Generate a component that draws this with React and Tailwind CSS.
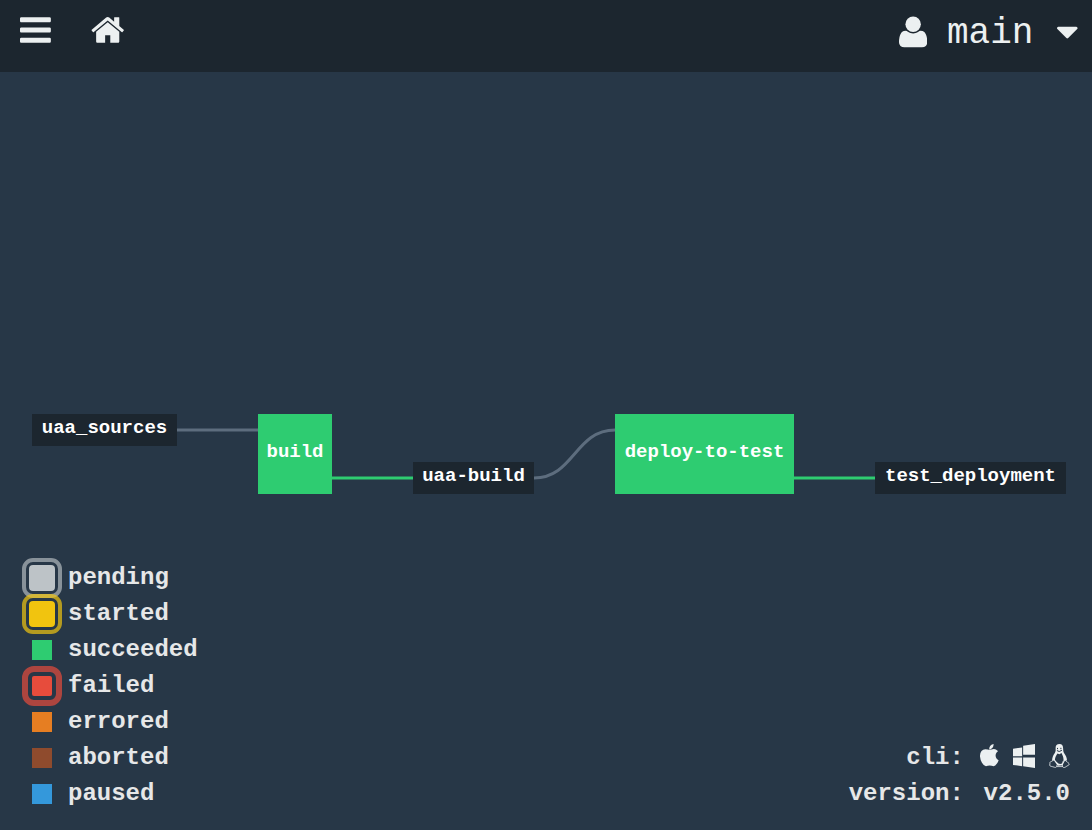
const statuses = [
	{ name: 'pending', swatch: 'size-[26px] rounded bg-[#bdc3c7] outline-4 outline-offset-3 outline-[#bdc3c7]/65' },
	{ name: 'started', swatch: 'size-[26px] rounded bg-[#f1c40f] outline-4 outline-offset-3 outline-[#f1c40f]/70' },
	{ name: 'succeeded', swatch: 'size-5 bg-[#2ecc71]' },
	{ name: 'failed', swatch: 'size-5 rounded-xs bg-[#e74c3c] outline-6 outline-offset-4 outline-[#e74c3c]/70' },
	{ name: 'errored', swatch: 'size-5 bg-[#e67e22]' },
	{ name: 'aborted', swatch: 'size-5 bg-[#8f4b2d]' },
	{ name: 'paused', swatch: 'size-5 bg-[#3498db]' },
];

// positions are relative to the pipeline canvas
const nodes = [
	{ name: 'uaa_sources', type: 'resource', x: 0, y: 0, width: 145 },
	{ name: 'build', type: 'job', x: 226, y: 0, width: 74 },
	{ name: 'uaa-build', type: 'resource', x: 381, y: 48, width: 121 },
	{ name: 'deploy-to-test', type: 'job', x: 583, y: 0, width: 179 },
	{ name: 'test_deployment', type: 'resource', x: 843, y: 48, width: 191 },
];

const edges = [
	{ d: 'M145 16H226', color: '#5d6d7e' },
	{ d: 'M300 64H381', color: '#2ecc71' },
	{ d: 'M502 64C542 64 543 16 583 16', color: '#5d6d7e' },
	{ d: 'M762 64H843', color: '#2ecc71' },
];

const nodeStyles = {
	resource: 'h-8 bg-[#1c262f] leading-7',
	job: 'h-20 bg-[#2ecc71] leading-[76px]',
};

function BarsIcon() {
	return (
		<svg viewBox="0 0 1536 1792" className="h-9" fill="currentColor" aria-hidden="true">
			<path d="M1536 1344v128q0 26-19 45t-45 19h-1408q-26 0-45-19t-19-45v-128q0-26 19-45t45-19h1408q26 0 45 19t19 45zm0-512v128q0 26-19 45t-45 19h-1408q-26 0-45-19t-19-45v-128q0-26 19-45t45-19h1408q26 0 45 19t19 45zm0-512v128q0 26-19 45t-45 19h-1408q-26 0-45-19t-19-45v-128q0-26 19-45t45-19h1408q26 0 45 19t19 45z" />
		</svg>
	);
}

function HomeIcon() {
	return (
		<svg viewBox="0 0 1664 1792" className="h-9" fill="currentColor" aria-hidden="true">
			<path d="M1408 992v480q0 26-19 45t-45 19h-384v-384h-256v384h-384q-26 0-45-19t-19-45v-480q0-1 .5-3t.5-3l575-474 575 474q1 2 1 6zm223-69l-62 74q-8 9-21 11h-3q-13 0-21-7l-692-577-692 577q-12 8-24 7-13-2-21-11l-62-74q-8-10-7-23.500t11-21.500l719-599q32-26 76-26t76 26l244 204v-195q0-14 9-23t23-9h192q14 0 23 9t9 23v408l219 182q10 8 11 21.500t-7 23.500z" />
		</svg>
	);
}

function UserIcon() {
	return (
		<svg viewBox="0 0 1408 1792" className="h-9" fill="currentColor" aria-hidden="true">
			<path d="M1408 1401q0 120-73 189.500t-194 69.500h-874q-121 0-194-69.500t-73-189.500q0-53 3.500-103.500t14-109 26.500-108.500 43-97.500 62-81 85.500-53.500 111.500-20q9 0 42 21.500t74.500 48 108 48 133.500 21.500 133.500-21.500 108-48 74.500-48 42-21.500q61 0 111.500 20t85.500 53.500 62 81 43 97.500 26.500 108.500 14 109 3.500 103.500z" />
			<circle cx="704" cy="512" r="384" />
		</svg>
	);
}

function CaretIcon() {
	return (
		<svg viewBox="0 0 1024 1792" className="h-9" fill="currentColor" aria-hidden="true">
			<path d="M1024 704q0 26-19 45l-448 448q-19 19-45 19t-45-19l-448-448q-19-19-19-45t19-45 45-19h896q26 0 45 19t19 45z" />
		</svg>
	);
}

function AppleIcon() {
	return (
		<svg viewBox="193 0 1408 1792" className="h-6" fill="currentColor" aria-hidden="true">
			<path d="M1585 1215q-39 125-123 250-129 196-257 196-49 0-140-32-86-32-151-32-61 0-142 33-81 34-132 34-152 0-301-259-147-261-147-503 0-228 113-374 113-144 284-144 72 0 177 30 104 30 138 30 45 0 143-34 102-34 173-34 119 0 213 65 52 36 104 100-79 67-114 118-65 94-65 207 0 124 69 223t158 126zm-376-1173q0 61-29 136-30 75-93 138-54 54-108 72-37 11-104 17 3-149 78-257 74-107 250-148 1 3 2.500 11t2.500 11q0 4 .5 10t.5 10z" />
		</svg>
	);
}

function WindowsIcon() {
	return (
		<svg viewBox="64 0 1664 1792" className="h-6" fill="currentColor" aria-hidden="true">
			<path d="M746 1006v651l-682-94v-557h682zm0-743v659h-682v-565zm982 743v786l-907-125v-661h907zm0-1006v794h-907v-669z" />
		</svg>
	);
}

function LinuxIcon() {
	return (
		<svg viewBox="0 0 21 24" className="h-6" fill="none" stroke="currentColor" strokeLinecap="round" strokeLinejoin="round" aria-hidden="true">
			<path fill="currentColor" fillRule="evenodd" stroke="none" d="M10.500 0C7.800 0 6.500 1.700 6.600 4.200C6.700 6.500 6.800 7.500 5.500 9.500C4 11.700 3.200 13.500 3.100 16.500L5 16.500L7.800 20.500L9 21.700L13.500 21.200L16 16.500L18 16.500C17.900 13.500 16.900 11.500 15.500 9.700C14.200 8 14.200 6.600 14.100 4C14 1.400 12.900 0 10.500 0ZM8.500 9.400L10.400 10.200L12.500 9.100C13.400 11.400 14.800 13.300 14.500 16.500C14.300 18.500 13.300 20 11.200 20C9 20 7.300 17.400 5.900 15.700C6 13 7.500 11.200 8.500 9.400Z" />
			<path stroke="#273747" strokeWidth="1" d="M8.500 4.300V4.800M11.900 4.200V4.800M8.300 6.700L10.200 7.500L12.500 6.500" />
			<path strokeWidth="0.8" d="M4.500 16C3.600 17.800 1.200 17.300 1 18.300C.8 19.500 1 20.300.7 21.300C.5 22.400 3.500 22.500 5.300 23.200C7.200 24 8.300 22.500 8 21.200M8.300 22.600H13.200M16.500 16.500C17 18 18.200 17.300 18.700 18.300C19 19.200 20.300 19.400 20.300 20.200C20.200 21.200 18 21.800 16.700 22.900C15.300 24 13.500 23.500 13.300 22C13.200 20.300 13.500 18.500 14.200 17.200" />
		</svg>
	);
}

function TopBar() {
	return (
		<header className="bg-[#1c262f]">
			<nav className="flex h-[72px] items-start justify-between px-5 pt-3">
				<div className="flex gap-10">
					<button type="button" aria-label="Pipelines">
						<BarsIcon />
					</button>
					<a href="/" aria-label="Home">
						<HomeIcon />
					</a>
				</div>
				<button type="button" className="-mr-1.5 flex items-center text-4xl leading-9">
					<UserIcon />
					<span className="pt-1 pr-6 pl-5">main</span>
					<CaretIcon />
				</button>
			</nav>
		</header>
	);
}

function Pipeline() {
	return (
		<div className="relative h-20 w-[1034px]">
			<svg className="absolute inset-0 size-full" fill="none" strokeWidth="3" aria-hidden="true">
				{edges.map((edge) => (
					<path key={edge.d} d={edge.d} stroke={edge.color} />
				))}
			</svg>
			{nodes.map((node) => (
				<a
					key={node.name}
					href={`#${node.name}`}
					className={`absolute text-center text-[19px] font-bold text-white ${nodeStyles[node.type]}`}
					style={{ left: node.x, top: node.y, width: node.width }}>
					{node.name}
				</a>
			))}
		</div>
	);
}

export default function App() {
	return (
		<div className="flex min-h-screen flex-col bg-[#273747] font-['Liberation_Mono',monospace] text-[#ecf0f1]">
			<TopBar />
			<main className="flex grow flex-col justify-end px-8 pb-[66px]">
				<Pipeline />
			</main>
			<footer className="flex items-end justify-between px-[22px] pb-[18px] text-2xl leading-9 font-bold">
				<ul className="text-[#e6e7e8]">
					{statuses.map((status) => (
						<li key={status.name} className="flex h-9 items-center gap-[6px]">
							<span className="flex w-10 justify-center">
								<span className={status.swatch} />
							</span>
							{status.name}
						</li>
					))}
				</ul>
				<dl className="grid grid-cols-[auto_auto] gap-x-4 text-right">
					<dt className="text-[#e6e7e8]">cli:</dt>
					<dd className="flex items-center justify-end gap-[14px] pb-1">
						<a href="#darwin" aria-label="Download for macOS">
							<AppleIcon />
						</a>
						<a href="#windows" aria-label="Download for Windows">
							<WindowsIcon />
						</a>
						<a href="#linux" aria-label="Download for Linux">
							<LinuxIcon />
						</a>
					</dd>
					<dt className="text-[#e6e7e8]">version:</dt>
					<dd className="text-[#e6e7e8]">v2.5.0</dd>
				</dl>
			</footer>
		</div>
	);
}
